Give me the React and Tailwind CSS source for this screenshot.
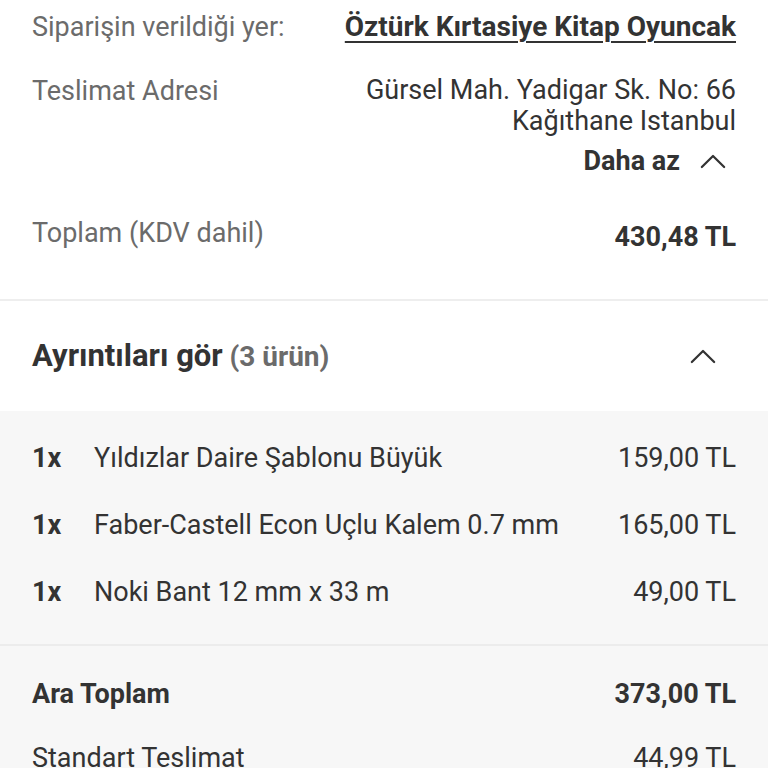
const items = [
  { qty: '1x', name: 'Yıldızlar Daire Şablonu Büyük', price: '159,00 TL' },
  { qty: '1x', name: 'Faber-Castell Econ Uçlu Kalem 0.7 mm', price: '165,00 TL' },
  { qty: '1x', name: 'Noki Bant 12 mm x 33 m', price: '49,00 TL' },
]

function ChevronUp({ className }) {
  return (
    <svg viewBox="0 0 28 16" className={className} fill="none" stroke="currentColor" strokeWidth="2.4" strokeLinecap="round" strokeLinejoin="round">
      <path d="M2 14 L14 2 L26 14" />
    </svg>
  )
}

export default function App() {
  return (
    <div className="w-[768px] h-[768px] overflow-hidden bg-white text-[#333] font-['Roboto','Liberation_Sans',sans-serif] text-[27px] leading-[32px]">
      <section className="px-8 pt-[11px] pb-[46px]">
        <div className="flex justify-between">
          <span className="text-[#6b6b6b]">Siparişin verildiği yer:</span>
          <span className="font-bold text-[28px] underline underline-offset-[5px] decoration-2">Öztürk Kırtasiye Kitap Oyuncak</span>
        </div>
        <div className="flex justify-between mt-8">
          <span className="text-[#6b6b6b]">Teslimat Adresi</span>
          <div className="text-right leading-[31px]">
            <div>Gürsel Mah. Yadigar Sk. No: 66</div>
            <div>Kağıthane Istanbul</div>
          </div>
        </div>
        <div className="flex justify-end items-center mt-[8px]">
          <span className="font-bold">Daha az</span>
          <ChevronUp className="w-[26px] h-[15px] ml-[20px] mr-[10px]" />
        </div>
        <div className="flex justify-between mt-10">
          <span className="text-[#6b6b6b]">Toplam (KDV dahil)</span>
          <span className="font-bold mt-1">430,48 TL</span>
        </div>
      </section>
      <div className="h-[2px] bg-[#eeeeee]" />
      <section className="flex items-center justify-between pl-8 pr-[52px] pt-[39px] pb-[38px]">
        <div>
          <span className="font-bold text-[31px]">Ayrıntıları gör</span>{' '}
          <span className="font-bold text-[#6b6b6b] text-[28px]">(3 ürün)</span>
        </div>
        <ChevronUp className="w-[26px] h-[15px]" />
      </section>
      <section className="bg-[#f7f7f7]">
        <div className="px-8 pt-[13px] pb-[19px]">
          {items.map((it) => (
            <div key={it.name} className="flex items-center h-[67px]">
              <span className="font-bold w-[62px]">{it.qty}</span>
              <span className="flex-1">{it.name}</span>
              <span>{it.price}</span>
            </div>
          ))}
        </div>
        <div className="h-[2px] bg-[#ececec]" />
        <div className="px-8 pt-[16px]">
          <div className="flex justify-between items-center h-[64px] font-bold">
            <span>Ara Toplam</span>
            <span>373,00 TL</span>
          </div>
          <div className="flex justify-between items-center h-[64px]">
            <span>Standart Teslimat</span>
            <span>44,99 TL</span>
          </div>
        </div>
      </section>
    </div>
  )
}
